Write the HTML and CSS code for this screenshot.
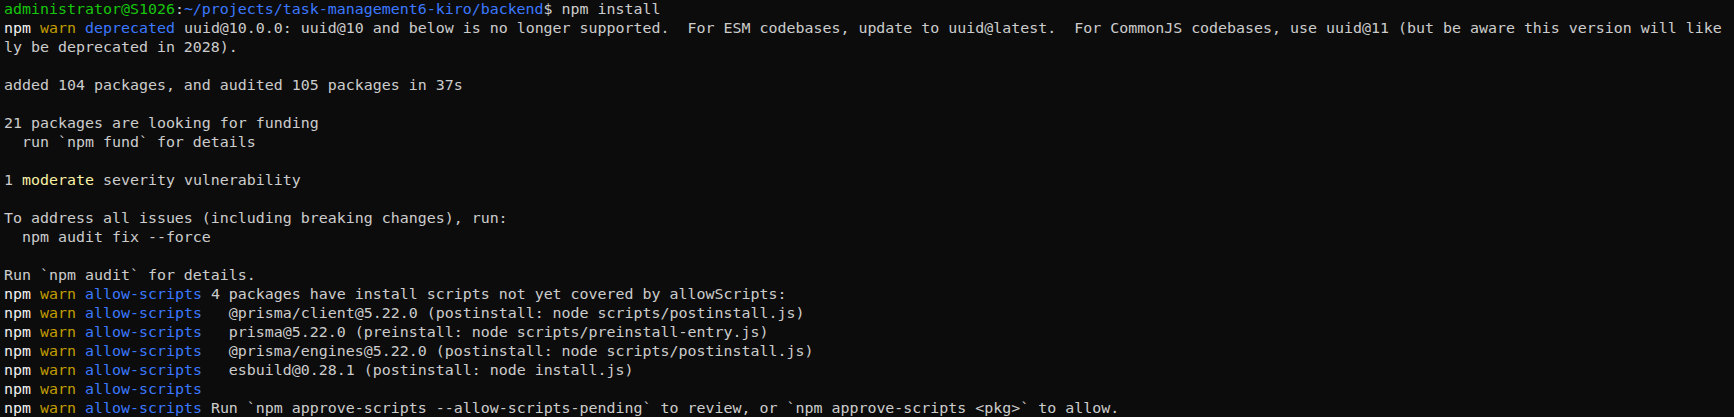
FILE: index.html
```html
<!DOCTYPE html>
<html>
<head>
<meta charset="utf-8">
<link rel="stylesheet" href="styles.css">
</head>
<body>
<div class="term">
<div class="ln"><span class="g">administrator@S1026</span>:<span class="b">~/projects/task-management6-kiro/backend</span>$ npm install</div>
<div class="ln"><span class="w">npm</span> <span class="y">warn</span> <span class="b">deprecated</span> uuid@10.0.0: uuid@10 and below is no longer supported.  For ESM codebases, update to uuid@latest.  For CommonJS codebases, use uuid@11 (but be aware this version will like</div>
<div class="ln">ly be deprecated in 2028).</div>
<div class="ln"></div>
<div class="ln">added 104 packages, and audited 105 packages in 37s</div>
<div class="ln"></div>
<div class="ln">21 packages are looking for funding</div>
<div class="ln">  run `npm fund` for details</div>
<div class="ln"></div>
<div class="ln">1 <span class="m">moderate</span> severity vulnerability</div>
<div class="ln"></div>
<div class="ln">To address all issues (including breaking changes), run:</div>
<div class="ln">  npm audit fix --force</div>
<div class="ln"></div>
<div class="ln">Run `npm audit` for details.</div>
<div class="ln"><span class="w">npm</span> <span class="y">warn</span> <span class="b">allow-scripts</span> 4 packages have install scripts not yet covered by allowScripts:</div>
<div class="ln"><span class="w">npm</span> <span class="y">warn</span> <span class="b">allow-scripts</span>   @prisma/client@5.22.0 (postinstall: node scripts/postinstall.js)</div>
<div class="ln"><span class="w">npm</span> <span class="y">warn</span> <span class="b">allow-scripts</span>   prisma@5.22.0 (preinstall: node scripts/preinstall-entry.js)</div>
<div class="ln"><span class="w">npm</span> <span class="y">warn</span> <span class="b">allow-scripts</span>   @prisma/engines@5.22.0 (postinstall: node scripts/postinstall.js)</div>
<div class="ln"><span class="w">npm</span> <span class="y">warn</span> <span class="b">allow-scripts</span>   esbuild@0.28.1 (postinstall: node install.js)</div>
<div class="ln"><span class="w">npm</span> <span class="y">warn</span> <span class="b">allow-scripts</span></div>
<div class="ln"><span class="w">npm</span> <span class="y">warn</span> <span class="b">allow-scripts</span> Run `npm approve-scripts --allow-scripts-pending` to review, or `npm approve-scripts &lt;pkg&gt;` to allow.</div>
</div>
</body>
</html>
```
FILE: styles.css
```css
html, body {
  margin: 0;
  padding: 0;
  background: #0c0c0c;
  height: 100%;
  overflow: hidden;
}
.term {
  padding: 0 0 0 4px;
  font-family: "DejaVu Sans Mono", "Liberation Mono", monospace;
  font-size: 14.95px;
  color: #cccccc;
}
.ln {
  height: 19px;
  line-height: 19px;
  white-space: pre;
}
.g { color: #16c60c; }
.b { color: #3b78ff; }
.w { color: #f2f2f2; }
.y { color: #c19c00; }
.m { color: #f9f1a5; }
```
